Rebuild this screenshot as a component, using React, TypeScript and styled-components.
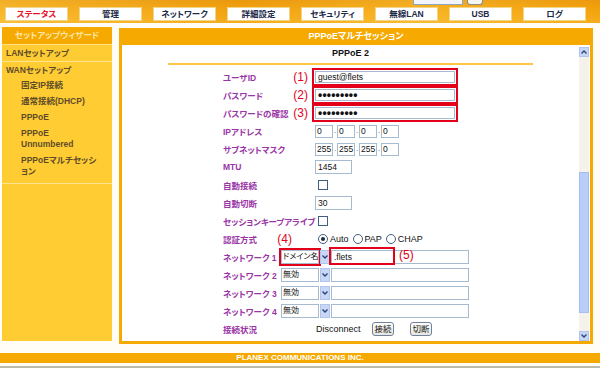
import styled, { createGlobalStyle } from 'styled-components';

const ORANGE = '#f6a900';
const RED = '#e2001a';

const GlobalStyle = createGlobalStyle`
  html, body {
    margin: 0;
    padding: 0;
  }
  body {
    width: 600px;
    height: 368px;
    overflow: hidden;
    background: #fffdf6;
    font-family: "Liberation Sans", "Noto Sans CJK JP", sans-serif;
    font-feature-settings: "palt";
  }
`;

const Page = styled.div`
  display: flex;
  flex-direction: column;
  width: 600px;
  height: 368px;
`;

/* ---------- top bar ---------- */

const TopBar = styled.div`
  height: 23px;
  display: flex;
  flex-direction: column;
  background:
    linear-gradient(90deg, rgba(255, 214, 90, 0.35), rgba(230, 140, 0, 0.15) 40%, rgba(255, 210, 80, 0.3) 70%, rgba(240, 150, 0, 0.2)),
    linear-gradient(180deg, #e99a10 0%, #f3a40e 35%, #f7b222 100%);
`;

const LangRow = styled.div`
  height: 5px;
  display: flex;
  justify-content: flex-end;
  gap: 4px;
  padding-right: 117px;
`;

const LangSelect = styled.div`
  width: 50px;
  height: 5px;
  box-sizing: border-box;
  background: #f2f5fb;
  border: 1px solid #8fa3c2;
  border-top: none;
`;

const LangButton = styled.div`
  width: 16px;
  height: 5px;
  box-sizing: border-box;
  background: #f4f4f0;
  border: 1px solid #8a8a86;
  border-top: none;
  border-radius: 0 0 3px 3px;
`;

const Tabs = styled.div`
  display: flex;
  gap: 11px;
  margin-top: 2px;
  padding-left: 5px;
`;

const Tab = styled.div<{ $active?: boolean }>`
  width: 63px;
  height: 14px;
  box-sizing: border-box;
  background: #ffffff;
  border: 1px solid #f3d58a;
  text-align: center;
  line-height: 12px;
  font-size: 8.5px;
  font-weight: 700;
  color: ${(p) => (p.$active ? '#e8102c' : '#1d2a48')};
`;

/* ---------- main ---------- */

const Main = styled.div`
  display: flex;
  gap: 7px;
  height: 317px;
  padding: 4px 0 0 2px;
`;

const Sidebar = styled.div`
  width: 110px;
  height: 314px;
  background: #ffcc33;
  display: flex;
  flex-direction: column;
`;

const SideHeader = styled.div`
  height: 17px;
  line-height: 17px;
  background: ${ORANGE};
  color: #ffe6a6;
  font-size: 8.5px;
  font-weight: 700;
  text-align: center;
  border-bottom: 1px solid #ffe08a;
`;

const SideGroup = styled.div`
  border-bottom: 1px solid #ffe592;
  padding-bottom: 3px;
`;

const SideItem = styled.div<{ $sub?: boolean }>`
  padding: ${(p) => (p.$sub ? '2px 10px 3px 19px' : '0 4px')};
  line-height: ${(p) => (p.$sub ? '11px' : '16px')};
  font-size: 8.5px;
  font-weight: 700;
  color: #5f4d2a;
`;

const SideRow = styled.div`
  border-bottom: 1px solid #ffe592;
`;

const Panel = styled.div`
  width: 474px;
  height: 316px;
  margin-top: 1px;
  box-sizing: border-box;
  background: ${ORANGE};
  padding: 0 3px 3px;
  display: flex;
  flex-direction: column;
`;

const PanelHeader = styled.div`
  height: 17px;
  line-height: 17px;
  text-align: center;
  color: #ffffff;
  font-size: 9px;
  font-weight: 700;
`;

const PanelBody = styled.div`
  flex: 1;
  min-height: 0;
  background: #ffffff;
  display: flex;
`;

const Content = styled.div`
  flex: 1;
  overflow: hidden;
`;

const Title = styled.div`
  height: 18px;
  line-height: 16px;
  text-align: center;
  font-size: 9px;
  font-weight: 700;
  color: #111;
`;

const Rule = styled.div`
  width: 365px;
  height: 2px;
  margin: 0 auto;
  background: #ffc545;
`;

const Form = styled.div`
  margin-top: 3px;
  padding-left: 101px;
  display: flex;
  flex-direction: column;
`;

const Row = styled.div`
  height: 18px;
  display: flex;
  align-items: center;
`;

const Label = styled.div<{ $w?: number }>`
  width: ${(p) => p.$w ?? 89}px;
  flex-shrink: 0;
  display: flex;
  align-items: center;
  font-size: 8.5px;
  font-weight: 700;
  color: #9a35a6;
  white-space: nowrap;
`;

const Mark = styled.span<{ $right?: number }>`
  margin-left: auto;
  margin-right: ${(p) => p.$right ?? 4}px;
  font-family: "Liberation Sans", sans-serif;
  font-size: 12px;
  font-weight: 400;
  color: ${RED};
`;

const Field = styled.div<{ $pad?: number }>`
  display: flex;
  align-items: center;
  padding-left: ${(p) => p.$pad ?? 3}px;
`;

const Highlight = styled.div`
  margin-left: -3px;
  border: 2px solid ${RED};
  padding: 1px;
`;

const Input = styled.div<{ $w: number; $h?: number }>`
  width: ${(p) => p.$w}px;
  height: ${(p) => p.$h ?? 14}px;
  box-sizing: border-box;
  border: 1px solid #a6bbcf;
  background: #ffffff;
  padding-left: 2px;
  font-size: 8.5px;
  line-height: ${(p) => (p.$h ?? 14) - 2}px;
  color: #111;
  white-space: nowrap;
  overflow: hidden;
`;

const IpInput = styled(Input)`
  padding-left: 1px;
`;

const Dots = styled.span`
  font-size: 12px;
  font-weight: 700;
  letter-spacing: 0.2px;
`;

const IpSep = styled.span`
  width: 4px;
  text-align: center;
  font-size: 8px;
  line-height: 14px;
  color: #555;
  align-self: flex-end;
`;

const Check = styled.div`
  width: 10px;
  height: 10px;
  margin-left: 3px;
  box-sizing: border-box;
  border: 1px solid #3f5f80;
  background: #fff;
`;

const Radio = styled.span<{ $on?: boolean }>`
  width: 10px;
  height: 10px;
  box-sizing: border-box;
  border-radius: 50%;
  border: 1px solid #3f5f80;
  background: #fff;
  display: flex;
  align-items: center;
  justify-content: center;
  margin-right: 2px;

  &::after {
    content: '';
    width: 4px;
    height: 4px;
    border-radius: 50%;
    background: ${(p) => (p.$on ? '#1b2b40' : 'transparent')};
  }
`;

const RadioLabel = styled.span`
  font-size: 9px;
  color: #111;
  margin-right: 4px;
`;

const Select = styled.div`
  display: flex;
  align-items: center;
`;

const SelectText = styled.div<{ $marked?: boolean }>`
  width: 38px;
  height: 14px;
  box-sizing: border-box;
  border: 1px solid #a6bbcf;
  ${(p) => (p.$marked ? `outline: 2px solid ${RED};` : '')}
  background: #fff;
  padding-left: 1px;
  font-size: 8px;
  line-height: 12px;
  color: #111;
  white-space: nowrap;
  overflow: hidden;
`;

const SelectArrow = styled.div`
  width: 10px;
  height: 14px;
  box-sizing: border-box;
  margin-left: 1px;
  background: #c8d7f6;
  border: 1px solid #b3c4ea;
  display: flex;
  align-items: center;
  justify-content: center;
`;

const NetInput = styled.div`
  position: relative;
  margin-left: 1px;
`;

const RedBox = styled.div`
  position: absolute;
  left: -2px;
  top: -3px;
  width: 66px;
  height: 18px;
  box-sizing: border-box;
  border: 2px solid ${RED};
`;

const FloatMark = styled.span`
  position: absolute;
  left: 68px;
  top: -2px;
  font-size: 12px;
  color: ${RED};
`;

const StatusText = styled.span`
  font-size: 9px;
  color: #111;
  width: 56px;
`;

const Button = styled.div<{ $gap?: number }>`
  width: 22px;
  height: 14px;
  box-sizing: border-box;
  margin-right: ${(p) => p.$gap ?? 0}px;
  border: 1px solid #71819c;
  border-radius: 3px;
  background: linear-gradient(180deg, #ffffff, #e7e6df);
  text-align: center;
  font-size: 8.5px;
  line-height: 12px;
  color: #111;
`;

/* ---------- scrollbar drawing ---------- */

const Scroll = styled.div`
  width: 10px;
  margin: 2px 1px 0 0;
  display: flex;
  flex-direction: column;
  background: #f4f2ea;
`;

const ScrollBtn = styled.div`
  height: 10px;
  box-sizing: border-box;
  background: #c8d7f6;
  border: 1px solid #b3c4ea;
  display: flex;
  align-items: center;
  justify-content: center;
`;

const Track = styled.div<{ $h: number }>`
  height: ${(p) => p.$h}px;
`;

const Thumb = styled.div<{ $h: number }>`
  height: ${(p) => p.$h}px;
  box-sizing: border-box;
  background: #b9cdf9;
  border: 1px solid #a7bdf0;
`;

/* ---------- footer ---------- */

const Footer = styled.div`
  margin-top: 9px;
  height: 10px;
  background: ${ORANGE};
  text-align: center;
  color: #ffffff;
  font-size: 8px;
  font-weight: 700;
  line-height: 10px;
`;

const BottomLine = styled.div`
  margin-top: 3px;
  height: 2px;
  background: #bcbcaa;
`;

function Chevron({ up }: { up?: boolean }) {
  return (
    <svg width="8" height="6" viewBox="0 0 8 6">
      <path
        d={up ? 'M1.5 4.5 L4 2 L6.5 4.5' : 'M1.5 1.5 L4 4 L6.5 1.5'}
        fill="none"
        stroke="#2a4478"
        strokeWidth="1.4"
      />
    </svg>
  );
}

const tabs = ['ステータス', '管理', 'ネットワーク', '詳細設定', 'セキュリティ', '無線LAN', 'USB', 'ログ'];

export default function App() {
  return (
    <Page>
      <GlobalStyle />
      <TopBar>
        <LangRow>
          <LangSelect />
          <LangButton />
        </LangRow>
        <Tabs>
          {tabs.map((t, i) => (
            <Tab key={t} $active={i === 0}>{t}</Tab>
          ))}
        </Tabs>
      </TopBar>

      <Main>
        <Sidebar>
          <SideHeader>セットアップウィザード</SideHeader>
          <SideRow>
            <SideItem>LANセットアップ</SideItem>
          </SideRow>
          <SideGroup>
            <SideItem>WANセットアップ</SideItem>
            <SideItem $sub>固定IP接続</SideItem>
            <SideItem $sub>通常接続(DHCP)</SideItem>
            <SideItem $sub>PPPoE</SideItem>
            <SideItem $sub>PPPoE<br />Unnumbered</SideItem>
            <SideItem $sub>PPPoEマルチセッション</SideItem>
          </SideGroup>
        </Sidebar>

        <Panel>
          <PanelHeader>PPPoEマルチセッション</PanelHeader>
          <PanelBody>
            <Content>
              <Title>PPPoE 2</Title>
              <Rule />
              <Form>
                <Row>
                  <Label>ユーザID<Mark>(1)</Mark></Label>
                  <Field>
                    <Highlight><Input $w={140} $h={12}>guest@flets</Input></Highlight>
                  </Field>
                </Row>
                <Row>
                  <Label>パスワード<Mark>(2)</Mark></Label>
                  <Field>
                    <Highlight><Input $w={140} $h={12}><Dots>•••••••••</Dots></Input></Highlight>
                  </Field>
                </Row>
                <Row>
                  <Label>パスワードの確認<Mark>(3)</Mark></Label>
                  <Field>
                    <Highlight><Input $w={140} $h={12}><Dots>•••••••••</Dots></Input></Highlight>
                  </Field>
                </Row>
                <Row>
                  <Label>IPアドレス</Label>
                  <Field>
                    <IpInput $w={18} $h={13}>0</IpInput><IpSep>.</IpSep>
                    <IpInput $w={18} $h={13}>0</IpInput><IpSep>.</IpSep>
                    <IpInput $w={18} $h={13}>0</IpInput><IpSep>.</IpSep>
                    <IpInput $w={18} $h={13}>0</IpInput>
                  </Field>
                </Row>
                <Row>
                  <Label>サブネットマスク</Label>
                  <Field>
                    <IpInput $w={18} $h={13}>255</IpInput><IpSep>.</IpSep>
                    <IpInput $w={18} $h={13}>255</IpInput><IpSep>.</IpSep>
                    <IpInput $w={18} $h={13}>255</IpInput><IpSep>.</IpSep>
                    <IpInput $w={18} $h={13}>0</IpInput>
                  </Field>
                </Row>
                <Row>
                  <Label>MTU</Label>
                  <Field><Input $w={37}>1454</Input></Field>
                </Row>
                <Row>
                  <Label>自動接続</Label>
                  <Field><Check /></Field>
                </Row>
                <Row>
                  <Label>自動切断</Label>
                  <Field><Input $w={37}>30</Input></Field>
                </Row>
                <Row>
                  <Label>セッションキープアライブ</Label>
                  <Field><Check /></Field>
                </Row>
                <Row>
                  <Label>認証方式<Mark $right={20}>(4)</Mark></Label>
                  <Field $pad={6}>
                    <Radio $on /><RadioLabel>Auto</RadioLabel>
                    <Radio /><RadioLabel>PAP</RadioLabel>
                    <Radio /><RadioLabel>CHAP</RadioLabel>
                  </Field>
                </Row>
                <Row>
                  <Label $w={58}>ネットワーク 1</Label>
                  <Field $pad={0}>
                    <Select>
                      <SelectText $marked>ドメイン名</SelectText>
                      <SelectArrow><Chevron /></SelectArrow>
                    </Select>
                    <NetInput>
                      <Input $w={138}>.flets</Input>
                      <RedBox />
                      <FloatMark>(5)</FloatMark>
                    </NetInput>
                  </Field>
                </Row>
                {[2, 3, 4].map((n) => (
                  <Row key={n}>
                    <Label $w={58}>ネットワーク {n}</Label>
                    <Field $pad={0}>
                      <Select>
                        <SelectText>無効</SelectText>
                        <SelectArrow><Chevron /></SelectArrow>
                      </Select>
                      <NetInput>
                        <Input $w={138} />
                      </NetInput>
                    </Field>
                  </Row>
                ))}
                <Row>
                  <Label>接続状況</Label>
                  <Field $pad={4}>
                    <StatusText>Disconnect</StatusText>
                    <Button $gap={16}>接続</Button>
                    <Button>切断</Button>
                  </Field>
                </Row>
              </Form>
            </Content>
            <Scroll>
              <ScrollBtn><Chevron up /></ScrollBtn>
              <Track $h={115} />
              <Thumb $h={141} />
              <Track $h={18} />
              <ScrollBtn><Chevron /></ScrollBtn>
            </Scroll>
          </PanelBody>
        </Panel>
      </Main>

      <Footer>PLANEX COMMUNICATIONS INC.</Footer>
      <BottomLine />
    </Page>
  );
}
